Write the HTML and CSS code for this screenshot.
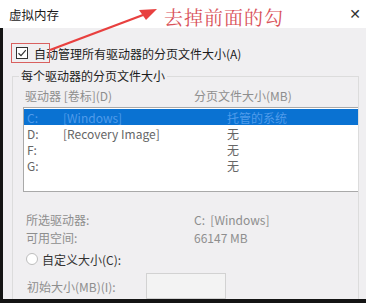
FILE: index.html
```html
<!DOCTYPE html>
<html>
<head>
  <meta charset="UTF-8">
  <title>虚拟内存</title>
  <link rel="stylesheet" href="styles.css">
</head>
<body>
  <div class="window">
    <div class="titlebar">
      <span class="title">虚拟内存</span>
      <span class="close">&#x2715;</span>
    </div>
    <div class="content">
      <div class="auto-row">
        <span class="checkbox">
          <svg width="12" height="12" viewBox="0 0 12 12"><path d="M2.5 6.2 L5 8.6 L9.8 3.2" fill="none" stroke="#333" stroke-width="1.2"/></svg>
        </span>
        <span>自动管理所有驱动器的分页文件大小(A)</span>
      </div>
      <fieldset class="group">
        <legend>每个驱动器的分页文件大小</legend>
        <div class="cols">
          <span class="col1">驱动器 [卷标](D)</span>
          <span>分页文件大小(MB)</span>
        </div>
        <div class="list">
          <div class="row selected"><span class="drv">C:</span><span class="lbl">[Windows]</span><span class="size">托管的系统</span></div>
          <div class="row"><span class="drv">D:</span><span class="lbl">[Recovery Image]</span><span class="size">无</span></div>
          <div class="row"><span class="drv">F:</span><span class="lbl"></span><span class="size">无</span></div>
          <div class="row"><span class="drv">G:</span><span class="lbl"></span><span class="size">无</span></div>
        </div>
        <div class="info">
          <div class="info-row"><span class="key">所选驱动器:</span><span>C:&nbsp; [Windows]</span></div>
          <div class="info-row"><span class="key">可用空间:</span><span>66147 MB</span></div>
        </div>
        <div class="radio-row">
          <span class="radio"></span>
          <span>自定义大小(C):</span>
        </div>
        <div class="field-row">
          <span class="field-key">初始大小(MB)(I):</span>
          <span class="input"></span>
        </div>
      </fieldset>
    </div>
    <div class="bottom"></div>

    <div class="mark"></div>
    <svg class="arrow" width="366" height="80" viewBox="0 0 366 80">
      <path d="M50 50 L143 15" stroke="#e8403f" stroke-width="2.4" fill="none"/>
      <path d="M157 9 L139 10 L146 20 Z" fill="#e8403f"/>
    </svg>
    <div class="note">去掉前面的勾</div>
  </div>
</body>
</html>
```

FILE: styles.css
```css
body{
  margin:0;
  font-family:"Noto Sans CJK SC","Noto Sans",sans-serif;
  font-size:12px;
}
.window{
  position:relative;
  width:366px;
  height:303px;
  overflow:hidden;
  display:flex;
  flex-direction:column;
  background:#f0eff1;
}
.titlebar{
  height:28px;
  flex:none;
  background:#fff;
  display:flex;
  align-items:center;
  justify-content:space-between;
  padding:0 5px 0 9px;
  color:#1a1a1a;
  font-size:12.5px;
}
.close{
  font-size:14px;
  color:#333;
  font-family:"DejaVu Sans",sans-serif;
}
.content{
  flex:1;
  border-left:3px solid #141414;
  padding:19px 0 0 9px;
  display:flex;
  flex-direction:column;
  color:#1c1c1c;
}
.auto-row{
  display:flex;
  align-items:center;
  gap:6px;
  height:12px;
  padding-left:4px;
}
.checkbox{
  width:12px;
  height:12px;
  border:1px solid #333;
  box-sizing:border-box;
  display:flex;
  background:#fff;
}
.checkbox svg{margin:-1px}
.group{
  margin:9px 7px 0 0;
  border:1px solid #dcdcdc;
  border-bottom:none;
  padding:0 0 0 10px;
  min-width:0;
  color:#8c8c8c;
}
.group legend{
  color:#1c1c1c;
  padding:0 2px;
  margin-left:-4px;
  line-height:16px;
}
.cols{
  display:flex;
  height:18px;
  align-items:center;
  margin-top:2px;
  padding-left:2px;
  color:#8e8e8e;
}
.col1{width:169px}
.list{
  margin-top:3px;
  height:82px;
  border:1px solid #a9a9a9;
  border-right:none;
  background:#fff;
  padding:1px 0 0 0;
}
.row{
  display:flex;
  height:16px;
  align-items:center;
  color:#666;
  padding-left:3px;
}
.row.selected{
  background:#0a72d2;
  color:#4f9bea;
}
.drv{width:36px}
.lbl{width:164px}
.info{
  margin-top:18px;
  padding-left:3px;
}
.info-row{
  display:flex;
  height:18px;
  align-items:center;
  color:#8e8e8e;
}
.key{width:168px}
.radio-row{
  display:flex;
  align-items:center;
  gap:4px;
  margin-top:4px;
  height:18px;
  padding-left:3px;
  color:#333;
}
.radio{
  width:10px;
  height:10px;
  border:1px solid #bdbdbd;
  border-radius:50%;
  background:#fff;
}
.field-row{
  display:flex;
  align-items:center;
  margin-top:5px;
  padding-left:4px;
  color:#8e8e8e;
}
.field-key{width:119px}
.input{
  width:80px;
  height:26px;
  border:1px solid #d2d2d2;
  box-sizing:border-box;
  background:#f3f3f3;
}
.bottom{
  height:4px;
  flex:none;
  background:#141414;
}
.mark{
  position:absolute;
  left:11px;
  top:43px;
  width:39px;
  height:20px;
  border:1px solid #d9605f;
  box-sizing:border-box;
}
.arrow{
  position:absolute;
  left:0;
  top:0;
}
.note{
  position:absolute;
  left:164px;
  top:3px;
  color:#d9525a;
  font-family:"Noto Serif CJK SC","Noto Sans CJK SC",serif;
  font-size:19px;
  letter-spacing:1px;
}
```
